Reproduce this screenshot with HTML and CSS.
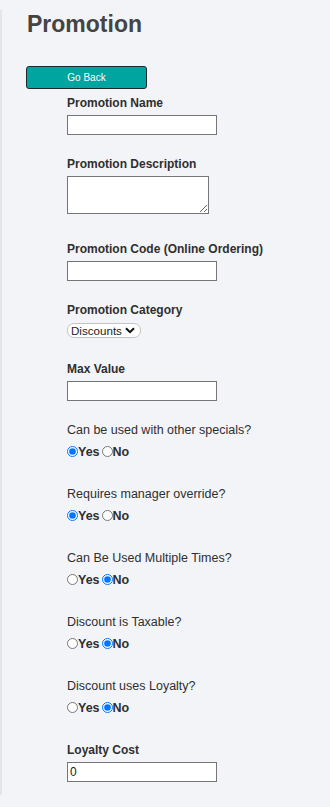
FILE: index.html
```html
<!DOCTYPE html>
<html lang="en">
<head>
  <meta charset="UTF-8">
  <title>Promotion</title>
  <meta name="viewport" content="width=device-width, initial-scale=1.0">
  <link rel="stylesheet" href="styles.css">
</head>
<body>
  <div class="page">
    <h1>Promotion</h1>
    <button class="back-btn" type="button">Go Back</button>

    <form class="promo-form">
      <div class="field">
        <label for="promoName">Promotion Name</label>
        <input type="text" id="promoName">
      </div>

      <div class="field field-area">
        <label for="promoDesc">Promotion Description</label>
        <textarea id="promoDesc"></textarea>
      </div>

      <div class="field">
        <label for="promoCode">Promotion Code (Online Ordering)</label>
        <input type="text" id="promoCode">
      </div>

      <div class="field field-select">
        <label for="promoCategory">Promotion Category</label>
        <select id="promoCategory">
          <option>Discounts</option>
          <option>Coupons</option>
          <option>Combos</option>
        </select>
      </div>

      <div class="field">
        <label for="maxValue">Max Value</label>
        <input type="text" id="maxValue">
      </div>

      <div class="field field-radio">
        <span class="question">Can be used with other specials?</span>
        <div class="choices">
          <input type="radio" name="otherSpecials" id="otherYes" checked><label for="otherYes">Yes</label>
          <input type="radio" name="otherSpecials" id="otherNo"><label for="otherNo">No</label>
        </div>
      </div>

      <div class="field field-radio">
        <span class="question">Requires manager override?</span>
        <div class="choices">
          <input type="radio" name="override" id="overrideYes" checked><label for="overrideYes">Yes</label>
          <input type="radio" name="override" id="overrideNo"><label for="overrideNo">No</label>
        </div>
      </div>

      <div class="field field-radio">
        <span class="question">Can Be Used Multiple Times?</span>
        <div class="choices">
          <input type="radio" name="multiple" id="multipleYes"><label for="multipleYes">Yes</label>
          <input type="radio" name="multiple" id="multipleNo" checked><label for="multipleNo">No</label>
        </div>
      </div>

      <div class="field field-radio">
        <span class="question">Discount is Taxable?</span>
        <div class="choices">
          <input type="radio" name="taxable" id="taxableYes"><label for="taxableYes">Yes</label>
          <input type="radio" name="taxable" id="taxableNo" checked><label for="taxableNo">No</label>
        </div>
      </div>

      <div class="field field-radio">
        <span class="question">Discount uses Loyalty?</span>
        <div class="choices">
          <input type="radio" name="loyalty" id="loyaltyYes"><label for="loyaltyYes">Yes</label>
          <input type="radio" name="loyalty" id="loyaltyNo" checked><label for="loyaltyNo">No</label>
        </div>
      </div>

      <div class="field">
        <label for="loyaltyCost">Loyalty Cost</label>
        <input type="text" id="loyaltyCost" value="0">
      </div>
    </form>
  </div>
</body>
</html>
```

FILE: styles.css
```css
:root {
  --bg: #f3f4f8;
  --strip: #e4e5e9;
  --text: #2f2f2f;
  --title: #444;
  --teal: #00a4a0;
  --input-border: #767676;
}

html, body {
  margin: 0;
  padding: 0;
}

body {
  background: var(--bg);
  font-family: "Liberation Sans", Arial, sans-serif;
  color: var(--text);
  min-height: 807px;
}

.page {
  margin-top: 22px;
  min-height: 785px;
  border-left: 2px solid var(--strip);
  padding-left: 23px;
}

h1 {
  margin: -12px 0 0 2px;
  font-size: 23px;
  line-height: 28px;
  font-weight: bold;
  color: var(--title);
}

.back-btn {
  display: block;
  width: 121px;
  height: 23px;
  margin: 28px 0 0 1px;
  padding: 0;
  background: var(--teal);
  color: white;
  border: 1px solid #1f2a2a;
  border-radius: 3px;
  font-family: inherit;
  font-size: 10px;
  cursor: pointer;
}

.promo-form {
  padding: 6px 0 0 42px;
}

.field {
  display: flex;
  flex-direction: column;
  align-items: flex-start;
  margin-bottom: 21px;
}

.field > label,
.question {
  display: block;
  font-size: 12.5px;
  line-height: 15px;
  margin-bottom: 5px;
}

.field > label {
  font-size: 12px;
  font-weight: bold;
  padding-top: 1px;
  margin-bottom: 4px;
}

input[type="text"] {
  width: 150px;
  height: 20px;
  box-sizing: border-box;
  margin: 0;
  padding: 1px 2px;
  border: 1px solid var(--input-border);
  background: white;
  font-family: inherit;
  font-size: 12px;
  color: #222;
}

textarea {
  width: 142px;
  height: 38px;
  box-sizing: border-box;
  margin: 0;
  border: 1px solid var(--input-border);
  background: white;
  font-family: inherit;
}

.field-area {
  margin-bottom: 27px;
}

select {
  appearance: none;
  width: 74px;
  height: 15px;
  box-sizing: border-box;
  margin: 1px 0 0;
  padding: 0 0 0 3px;
  border: 1px solid #c3c3c3;
  border-radius: 7px;
  background: white url("data:image/svg+xml,%3Csvg xmlns='http://www.w3.org/2000/svg' width='10' height='7' viewBox='0 0 10 7'%3E%3Cpath d='M1 1.2l4 4 4-4' fill='none' stroke='%23111' stroke-width='2'/%3E%3C/svg%3E") no-repeat right 5px center;
  font-family: inherit;
  font-size: 11.6px;
  line-height: 13px;
  color: #222;
}

.field-select {
  margin-bottom: 23px;
}

.field-radio {
  margin-bottom: 27px;
}

.field-radio .question {
  padding-top: 1px;
  margin-bottom: 6px;
}

.choices {
  display: flex;
  align-items: center;
  height: 15px;
  font-size: 12.5px;
}

.choices input[type="radio"] {
  width: 11px;
  height: 11px;
  margin: 0;
}

.choices label {
  font-weight: bold;
  margin-right: 2px;
}
```
